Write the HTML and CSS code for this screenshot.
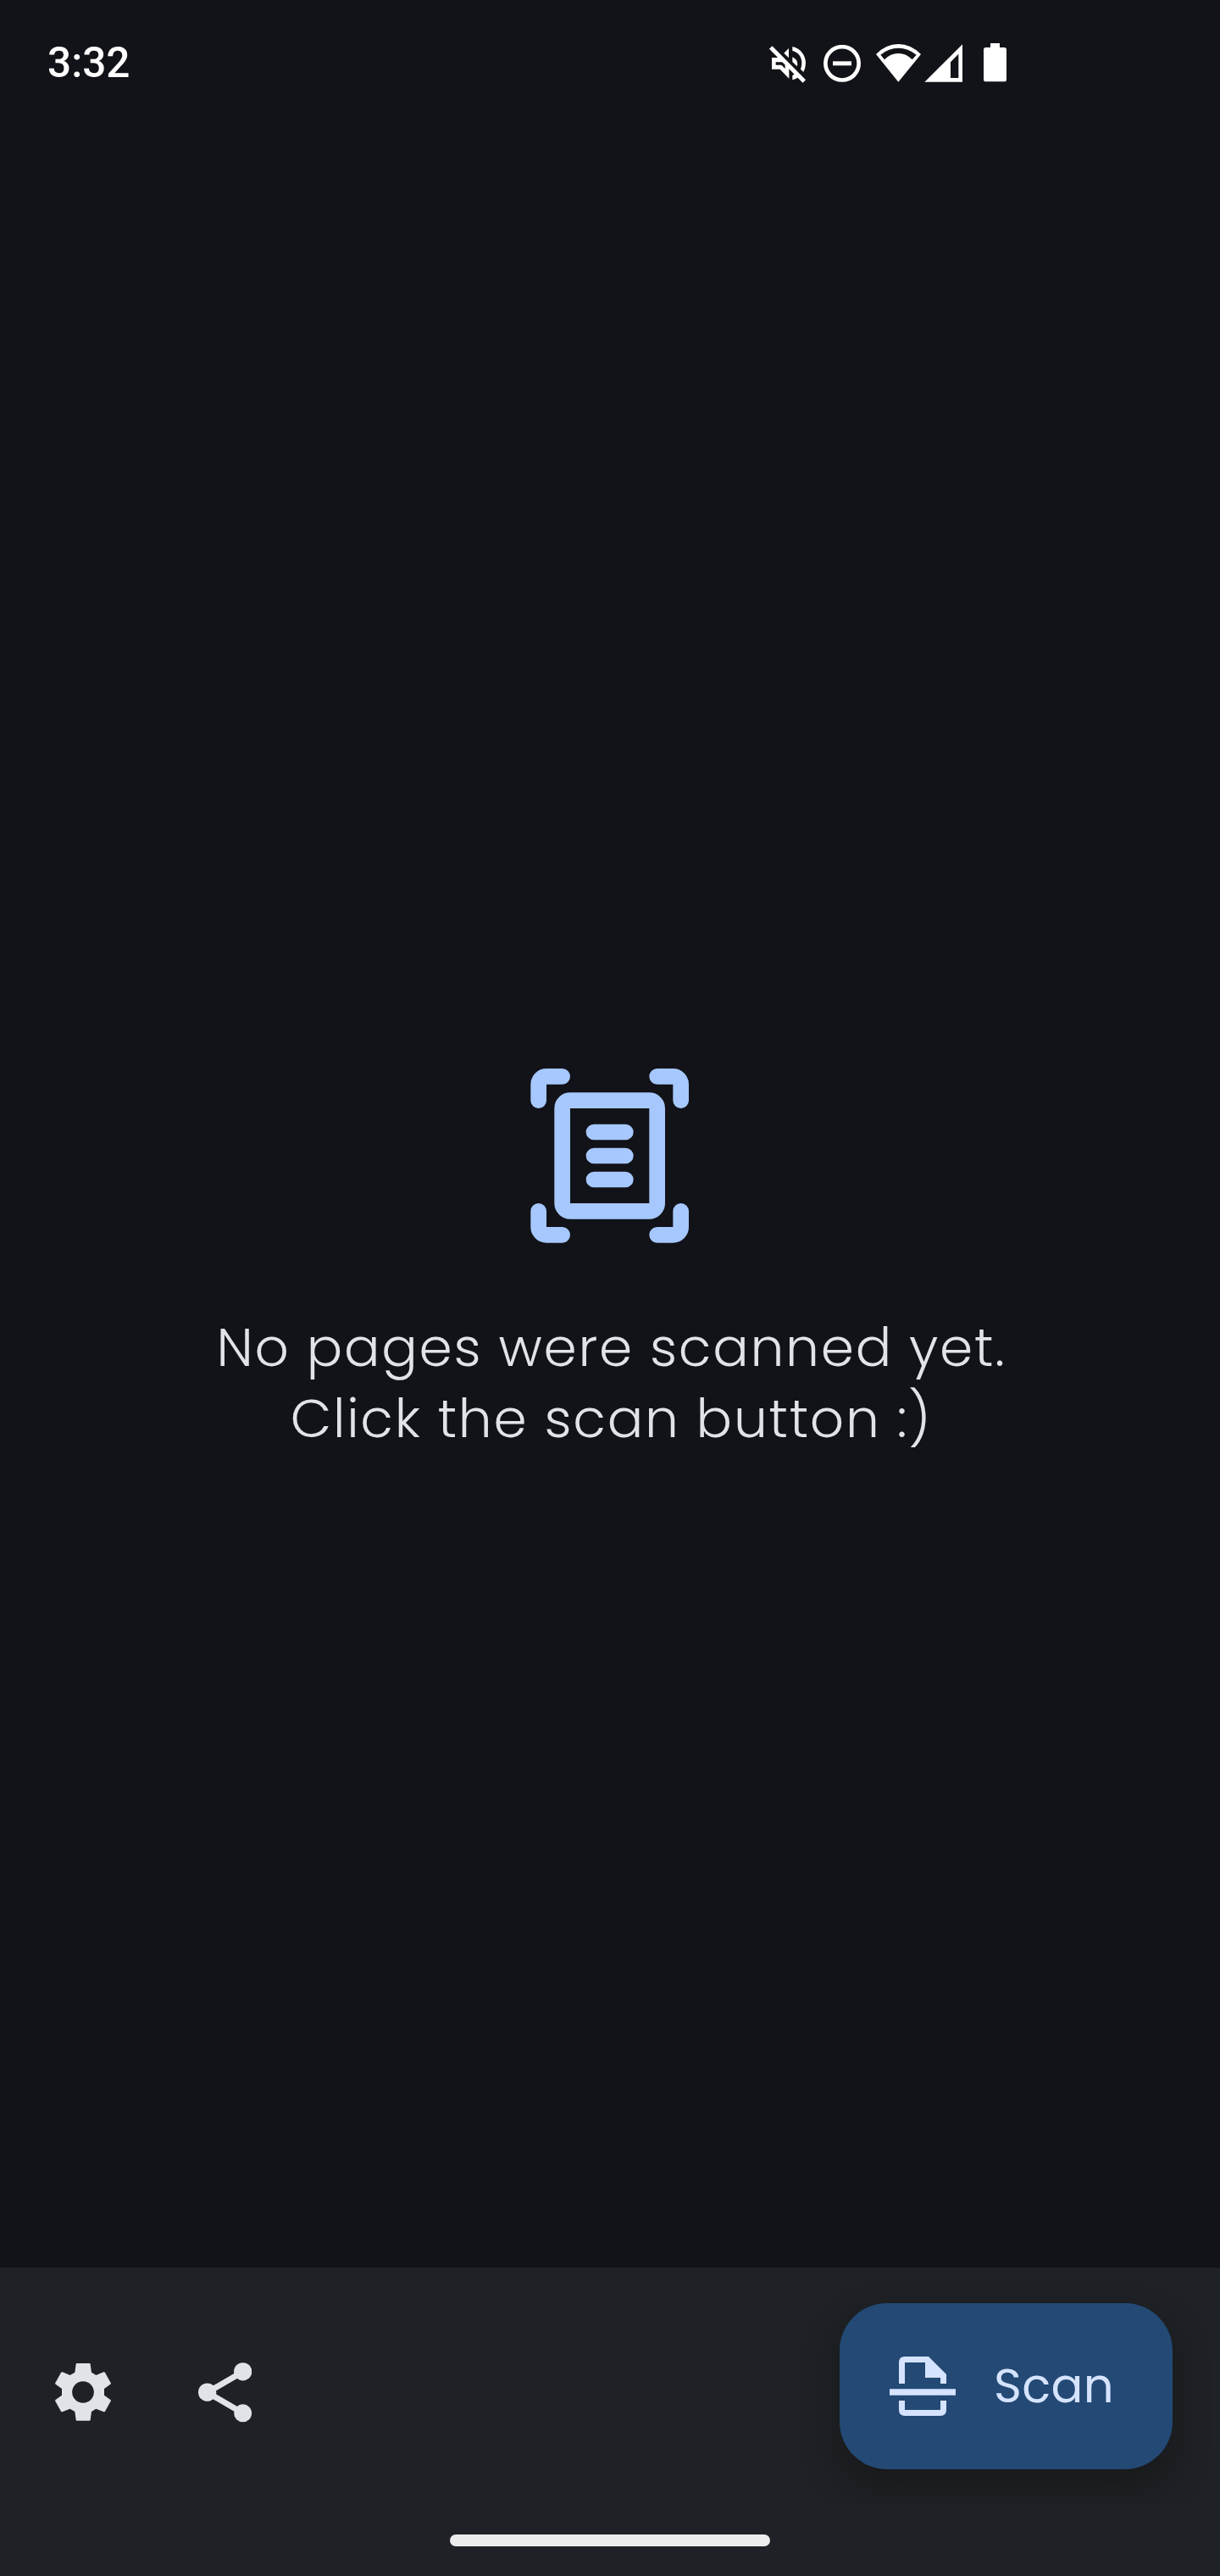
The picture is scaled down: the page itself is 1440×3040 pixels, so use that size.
FILE: index.html
```html
<!DOCTYPE html>
<html lang="en">
<head>
<meta charset="utf-8">
<title>Scanner</title>
<link rel="stylesheet" href="styles.css">
</head>
<body>
<div class="screen">
  <header class="status-bar">
    <span class="clock">3:32</span>
    <div class="status-icons">
      <svg class="icon-mute" viewBox="54 72 129 132" width="43" height="44">
        <path fill="none" stroke="#fff" stroke-width="15" d="M59 78L178 198"/>
        <path fill="#fff" d="M106 98L123 81V115ZM63 114H87L103 130H77V140H97L110 153V137L124 151V188L92 155H63ZM136 112Q154 121 154 137L152 145L136 129ZM136 75C164 81 183 105 183 133Q183 150 175 165L165 155Q169 145 169 133C169 111 157 95 136 90ZM136 177L146 171L159 182Q148 190 136 193Z"/>
      </svg>
      <svg class="icon-dnd" viewBox="246 69 132 132" width="44" height="44">
        <circle cx="312" cy="134.500" r="59" fill="none" stroke="#fff" stroke-width="14"/>
        <path fill="#fff" d="M279 127H345V142H279Z"/>
      </svg>
      <svg class="icon-wifi" viewBox="432 66 159 135" width="53" height="45">
        <path fill="#fff" fill-rule="evenodd" d="M432 102Q467 66 511 66T591 102L511 200ZM448 104L462 121Q483 99 511 99T560 121L575 104Q545 80 511 80T448 104Z"/>
      </svg>
      <svg class="icon-signal" viewBox="603 66 135 135" width="45" height="45">
        <path fill="#fff" fill-rule="evenodd" d="M738 67V200H604ZM724 101L696 130V186H724Z"/>
      </svg>
      <svg class="icon-battery" viewBox="813 63 81 138" width="27" height="46">
        <path fill="#fff" d="M837 63H870V78H886Q894 78 894 86V192Q894 199 886 199H821Q813 199 813 192V86Q813 78 821 78H837Z"/>
      </svg>
    </div>
  </header>

  <main class="empty-state">
    <svg class="scan-art" viewBox="79 63 562 618" width="187.333" height="206">
      <g fill="none" stroke="#a6c8ff" stroke-width="56" stroke-linecap="round">
        <path d="M108 176V119A28 28 0 0 1 136 91H192M528 91H584A28 28 0 0 1 612 119V176M612 568V624A28 28 0 0 1 584 652H528M192 652H136A28 28 0 0 1 108 624V568"/>
        <rect x="192" y="176" width="336" height="392" rx="28"/>
        <path d="M304 288H416M304 372H416M304 456H416"/>
      </g>
    </svg>
    <p class="message">No pages were scanned yet.<br>Click the scan button :)</p>
  </main>

  <footer class="bottom-bar">
    <div class="actions">
      <svg class="icon-settings" viewBox="75 87 198 204" width="66" height="68">
        <path fill="#e2e2e9" fill-rule="evenodd" d="M152 87H197Q200 87 200 90L204 119L220 129L247 118Q250 117 252 120L272 156Q274 159 271 161L249 177V200L271 216Q274 218 272 221L252 257Q250 260 247 259L220 248L204 258L200 287Q200 290 197 290H152Q149 290 149 287L145 258L128 248L101 259Q98 260 96 257L76 221Q74 218 77 216L99 200V177L77 161Q74 159 76 156L96 120Q98 117 101 118L128 129L145 119L149 90Q149 87 152 87ZM174 150.500A38.500 38.500 0 1 0 174 227.500A38.500 38.500 0 1 0 174 150.500Z"/>
      </svg>
      <svg class="icon-share" viewBox="583 83 190 212" width="63.333" height="70.667">
        <path fill="none" stroke="#e2e2e9" stroke-width="21" d="M741 116L615 189L741 262"/>
        <g fill="#e2e2e9"><circle cx="741" cy="115.500" r="32"/><circle cx="615" cy="188.500" r="32"/><circle cx="741" cy="262.500" r="31.500"/></g>
      </svg>
    </div>
    <button class="scan-button" type="button">
      <svg viewBox="270 363 234 210" width="78" height="70">
        <path fill="#d5e3ff" fill-rule="evenodd" d="M303 459V384Q303 363 324 363H408L471 426V459H450V438H396V384H324V459ZM270 478H504V500H270ZM303 519H324V552H450V519H471V552Q471 573 450 573H324Q303 573 303 552Z"/>
      </svg>
      <span class="scan-label">Scan</span>
    </button>
  </footer>
  <div class="nav-area"><div class="gesture-bar"></div></div>
</div>
</body>
</html>
```
FILE: styles.css
```css
* { box-sizing: border-box; }
body { margin: 0; background: #121318; }
svg { display: block; flex: none; }
.screen {
  width: 1440px;
  height: 3040px;
  display: flex;
  flex-direction: column;
  background: #121318;
  font-family: Poppins, Inter, sans-serif;
}
.status-bar {
  height: 150px;
  padding: 0 252px 0 56px;
  display: flex;
  justify-content: space-between;
}
.clock {
  margin-top: 44px;
  font: 500 49.500px/60px Roboto, sans-serif;
  color: #fff;
}
.status-icons { display: flex; align-items: flex-start; padding-top: 51px; }
.icon-mute { margin: 3px 21px 0 0; }
.icon-dnd { margin: 2px 18px 0 0; }
.icon-wifi { margin: 1px 4px 0 0; }
.icon-signal { margin: 1px 25px 0 0; }
.empty-state {
  height: 2526px;
  padding-top: 1111px;
  display: flex;
  flex-direction: column;
  align-items: center;
}
.message {
  margin: 81px 0 0;
  padding-left: 3px;
  font-size: 63px;
  font-weight: 300;
  line-height: 84px;
  letter-spacing: 1.75px;
  color: #e2e2e9;
  text-align: center;
  white-space: nowrap;
  font-feature-settings: "cv11" 1;
}
.bottom-bar {
  height: 280px;
  padding: 42px 56px 0 65px;
  display: flex;
  align-items: flex-start;
  justify-content: space-between;
  background: #1e2125;
}
.actions { display: flex; gap: 103px; padding-top: 71px; }
.icon-share { margin-top: -1px; }
.scan-button {
  width: 393px;
  height: 196px;
  padding: 0 0 0 59px;
  border: 0;
  border-radius: 56px;
  display: flex;
  align-items: center;
  gap: 45px;
  background: #234974;
  color: #d5e3ff;
  font: 400 56px/84px Poppins, Inter, sans-serif;
  font-feature-settings: "cv11" 1;
  box-shadow: 0 20px 40px -2px rgba(22, 20, 20, .6);
}
.scan-label { letter-spacing: .35px; }
.nav-area {
  height: 84px;
  padding-top: 35px;
  background: #1e2125;
}
.gesture-bar {
  width: 378px;
  height: 14px;
  margin: 0 auto;
  border-radius: 7px;
  background: #ececec;
}
```
